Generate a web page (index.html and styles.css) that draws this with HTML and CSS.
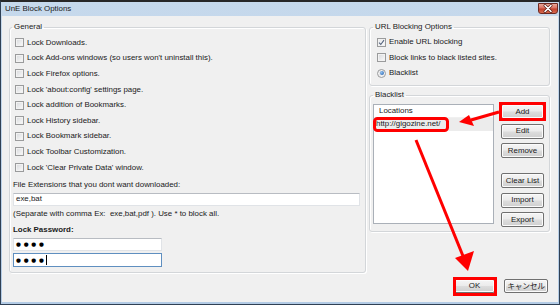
FILE: index.html
```html
<!DOCTYPE html>
<html>
<head>
<meta charset="utf-8">
<title>UnE Block Options</title>
<link rel="stylesheet" href="styles.css">
</head>
<body>
<div class="window">
  <div class="titlebar">
    <span class="title">UnE Block Options</span>
    <span class="close">
      <svg width="20" height="11" viewBox="0 0 20 11">
        <path d="M7 2.5 L13 8.5 M13 2.5 L7 8.5" stroke="#5a2018" stroke-width="3" stroke-linecap="round"/>
        <path d="M7 2.5 L13 8.5 M13 2.5 L7 8.5" stroke="#ffffff" stroke-width="1.6" stroke-linecap="round"/>
      </svg>
    </span>
  </div>
  <div class="client">
    <div class="main">
      <fieldset class="group general">
        <legend>General</legend>
        <ul class="checks">
          <li><span class="cb"></span>Lock Downloads.</li>
          <li><span class="cb"></span>Lock Add-ons windows (so users won't uninstall this).</li>
          <li><span class="cb"></span>Lock Firefox options.</li>
          <li><span class="cb"></span>Lock 'about:config' settings page.</li>
          <li><span class="cb"></span>Lock addition of Bookmarks.</li>
          <li><span class="cb"></span>Lock History sidebar.</li>
          <li><span class="cb"></span>Lock Bookmark sidebar.</li>
          <li><span class="cb"></span>Lock Toolbar Customization.</li>
          <li><span class="cb"></span>Lock 'Clear Private Data' window.</li>
        </ul>
        <div class="label ext-label">File Extensions that you dont want downloaded:</div>
        <div class="textbox wide">exe,bat</div>
        <div class="label hint">(Separate with comma Ex:&nbsp; exe,bat,pdf ). Use * to block all.</div>
        <div class="label bold">Lock Password:</div>
        <div class="textbox pw"><span class="dots">●●●●</span></div>
        <div class="textbox pw focus"><span class="dots">●●●●</span><span class="caret"></span></div>
      </fieldset>
      <div class="side">
        <fieldset class="group url">
          <legend>URL Blocking Options</legend>
          <ul class="checks">
            <li><span class="cb checked"><svg width="7" height="7" viewBox="0 0 7 7"><path d="M1 3.6 L2.8 5.5 L6 1.2" fill="none" stroke="#56657e" stroke-width="1.1"/></svg></span>Enable URL blocking</li>
            <li><span class="cb"></span>Block links to black listed sites.</li>
            <li><span class="radio"><span class="dot"></span></span>Blacklist</li>
          </ul>
        </fieldset>
        <fieldset class="group blacklist">
          <legend>Blacklist</legend>
          <div class="bl-body">
            <div class="listbox">
              <div class="lb-head">Locations</div>
              <div class="lb-row sel">http://gigozine.net/</div>
            </div>
            <div class="btncol">
              <button class="btn">Add</button>
              <button class="btn">Edit</button>
              <button class="btn">Remove</button>
              <div class="spacer"></div>
              <button class="btn">Clear List</button>
              <button class="btn">Import</button>
              <button class="btn">Export</button>
            </div>
          </div>
        </fieldset>
      </div>
    </div>
    <div class="footer">
      <button class="btn ok">OK</button>
      <button class="btn cancel">キャンセル</button>
    </div>
  </div>
  <svg class="annot" width="560" height="305" viewBox="0 0 560 305">
    <g fill="none" stroke="#f00" stroke-width="3">
      <rect x="500.5" y="103.5" width="44" height="16"/>
      <rect x="374.5" y="118.5" width="73" height="12" rx="3"/>
      <rect x="454.5" y="278.5" width="41" height="16"/>
      <line x1="499" y1="112" x2="471" y2="120"/>
      <line x1="416" y1="140" x2="463" y2="256"/>
    </g>
    <g fill="#f00">
      <polygon points="459,122 469,115 474,126"/>
      <polygon points="468,271 455,258 474,251"/>
    </g>
  </svg>
</div>
</body>
</html>
```

FILE: styles.css
```css
* {
  box-sizing: border-box;
}

html, body {
  margin: 0;
  padding: 0;
}

body {
  width: 560px;
  height: 305px;
  overflow: hidden;
  background: #2a2a2a;
  font-family: "Liberation Sans", Arial, sans-serif;
  font-size: 7.9px;
  line-height: 10px;
  color: #1a1a1a;
}

.window {
  position: relative;
  width: 560px;
  height: 305px;
  display: flex;
  flex-direction: column;
  border: 1px solid #2f4054;
  border-top: 2px solid #272727;
  padding: 0 1px 2px 1px;
  background: linear-gradient(#c6d9ec, #b3cbe5);
}

.titlebar {
  height: 14px;
  display: flex;
  justify-content: space-between;
  align-items: flex-start;
  padding-left: 3px;
}

.title {
  margin-top: 2px;
  color: #1a1a1a;
}

.close {
  display: block;
  width: 20px;
  height: 11px;
  margin-top: 1px;
  border: 1px solid #6e2a22;
  border-radius: 0 0 3px 3px;
  background: linear-gradient(#eaa898 0%, #d87060 45%, #c2402c 55%, #d86a4f 100%);
  line-height: 0;
}

.close svg {
  margin: -1px 0 0 -1px;
}

.client {
  flex: 1;
  display: flex;
  flex-direction: column;
  background: #f0f0f0;
  padding: 6px 8px 0 7px;
}

.main {
  display: flex;
  gap: 3px;
  align-items: flex-start;
}

.group {
  margin: 0;
  border: 1px solid #d3d6d9;
  border-radius: 3px;
  box-shadow: 1px 1px 0 #ffffff, inset 1px 1px 0 #ffffff;
  min-width: 0;
}

.group legend {
  padding: 0 2px;
  line-height: 10px;
}

.general {
  width: 357px;
  height: 251px;
  padding: 3px 5px 0 3px;
}

.general legend {
  margin-left: -1px;
}

.checks {
  list-style: none;
  margin: 0;
  padding: 0 0 0 2px;
}

.checks li {
  height: 15.6px;
  display: flex;
  align-items: center;
  gap: 3px;
  white-space: nowrap;
}

.cb, .radio {
  flex: none;
  width: 9px;
  height: 9px;
  border: 1px solid #9a9b9c;
  background: linear-gradient(135deg, #d6d8db, #fbfbfb);
  box-shadow: inset 0 0 0 1px #f2f2f2;
  display: flex;
  align-items: center;
  justify-content: center;
}

.cb.checked {
  background: linear-gradient(135deg, #e4e6e9, #fdfdfd);
}

.radio {
  border-radius: 50%;
}

.radio .dot {
  width: 4px;
  height: 4px;
  border-radius: 50%;
  background: radial-gradient(circle at 35% 35%, #8fc0f0, #1f5ba8);
}

.label {
  white-space: nowrap;
}

.ext-label {
  margin-top: 4.5px;
}

.hint {
  margin-top: 3px;
}

.bold {
  font-weight: bold;
  margin-top: 6px;
}

.textbox {
  height: 13px;
  background: #ffffff;
  border: 1px solid #e0e3e7;
  border-top-color: #b8bcc2;
  padding-left: 2px;
  display: flex;
  align-items: center;
}

.wide {
  width: 347px;
  margin-top: 3px;
}

.pw {
  width: 149px;
  margin-top: 3px;
}

.pw.focus {
  margin-top: 2px;
  height: 14px;
  border-color: #5f8fc0;
}

.dots {
  font-family: "DejaVu Sans", sans-serif;
  font-size: 5.6px;
  letter-spacing: 2.8px;
  color: #000;
}

.caret {
  width: 1px;
  height: 10px;
  margin-left: -1px;
  background: #000;
}

.side {
  width: 181px;
  display: flex;
  flex-direction: column;
}

.url {
  height: 64px;
  padding: 2.5px 4px 0 6px;
}

.url legend {
  margin-left: -3px;
}

.url .checks {
  padding-left: 1px;
}

.url .checks li {
  height: 15.5px;
}

.blacklist {
  margin-top: 4px;
  height: 142px;
  padding: 4px 5px 0 3px;
}

.bl-body {
  display: flex;
  align-items: flex-start;
}

.listbox {
  width: 121px;
  height: 120px;
  background: #ffffff;
  border: 1px solid #aab0b8;
}

.lb-head {
  height: 13px;
  padding: 1px 0 0 5px;
  border-bottom: 1px solid #f0f0f0;
}

.lb-row {
  height: 13px;
  padding: 1px 0 0 2px;
}

.lb-row.sel {
  background: #ececec;
}

.btncol {
  margin-left: 7px;
  width: 43px;
  display: flex;
  flex-direction: column;
  gap: 4.5px;
}

.spacer {
  height: 6px;
}

.btn {
  margin: 0;
  height: 15px;
  padding: 0;
  font-family: inherit;
  font-size: inherit;
  line-height: 10px;
  color: #1a1a1a;
  border: 1px solid #707070;
  border-radius: 2px;
  background: linear-gradient(#f5f5f5 0%, #ebebeb 48%, #dddddd 52%, #cfcfcf 100%);
  box-shadow: inset 0 0 0 1px #fbfbfb;
}

.footer {
  display: flex;
  justify-content: flex-end;
  gap: 9px;
  padding: 6px 2px 0 0;
}

.footer .btn {
  height: 14px;
}

.ok {
  width: 41px;
}

.cancel {
  width: 44px;
  font-family: "Noto Sans CJK JP", sans-serif;
  font-size: 7.8px;
  letter-spacing: -0.3px;
}

.annot {
  position: absolute;
  left: -1px;
  top: -2px;
  pointer-events: none;
}
```
